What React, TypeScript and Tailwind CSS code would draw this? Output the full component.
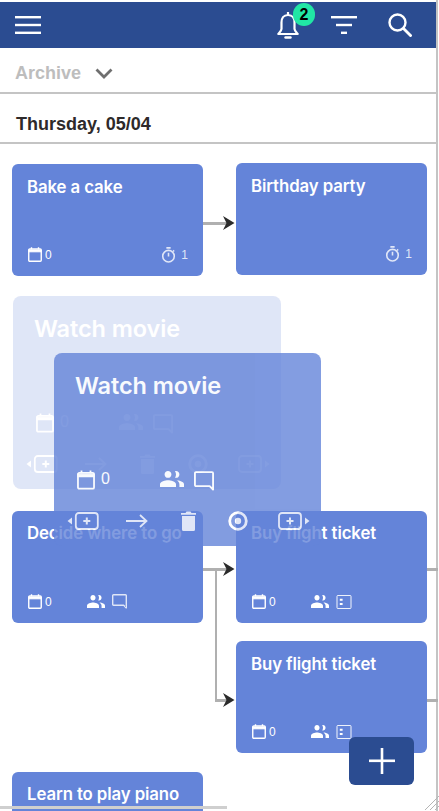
import React from "react";

const sans = "font-['Liberation_Sans',Arial,sans-serif]";
const card = "font-['Inter',sans-serif]";

function Calendar({ className = "" }: { className?: string }) {
  return (
    <svg viewBox="0 0 14 15" className={className} fill="none" stroke="currentColor">
      <rect x="0.75" y="2" width="12.5" height="12.25" rx="1" strokeWidth="1.4" />
      <path d="M.75 3h12.5v1.800H.75z" fill="currentColor" strokeWidth="1" />
      <path d="M3.500.2v2M10.500.2v2" strokeWidth="1.400" />
    </svg>
  );
}
function Timer({ className = "" }: { className?: string }) {
  return (
    <svg viewBox="0 0 14 15" className={className} fill="none" stroke="currentColor" strokeWidth="1.500">
      <circle cx="7" cy="8.600" r="5.400" />
      <path d="M5 .8h4M7 5.400v3.400M11.300 3.200l1 1" />
    </svg>
  );
}
function People({ className = "" }: { className?: string }) {
  return (
    <svg viewBox="2 5 21 14" className={className} fill="currentColor" preserveAspectRatio="none">
      <path d="M16 11c1.660 0 2.990-1.340 2.990-3S17.660 5 16 5c-.3 0-.6.05-.9.14.6.72.9 1.780.9 2.860 0 1.080-.33 2.100-.9 2.860.29.09.6.14.9.14zM9 11c1.660 0 3-1.340 3-3S10.660 5 9 5 6 6.340 6 8s1.340 3 3 3zm0 2c-2.330 0-7 1.170-7 3.500V19h14v-2.500C16 14.170 11.330 13 9 13zm7.500.1c1.450.98 2.500 2 2.500 3.400V19h4v-2.500c0-2.100-3.900-3.200-6.500-3.400z" />
    </svg>
  );
}
function Comment({ className = "" }: { className?: string }) {
  return (
    <svg viewBox="0 0 15 15" className={className} fill="none" stroke="currentColor" strokeWidth="1.400">
      <path d="M1.500.8h12a.8.8 0 0 1 .8.8v12.300l-2.600-2.600H1.500a.8.8 0 0 1-.8-.8V1.600a.8.8 0 0 1 .8-.8z" strokeLinejoin="round" />
    </svg>
  );
}
function Detail({ className = "" }: { className?: string }) {
  return (
    <svg viewBox="0 0 16 15" className={className} fill="none" stroke="currentColor" strokeWidth="1">
      <rect x=".5" y=".5" width="15" height="14" rx="1" />
      <path d="M3.500 4h3v2.200h-3zM3.500 8.500h3v2.200h-3z" fill="currentColor" stroke="none" />
    </svg>
  );
}
function AddBox({ side }: { side: "l" | "r" }) {
  return (
    <svg viewBox="0 0 32 18" className="w-[32px] h-[18px]" fill="none" stroke="currentColor">
      {side === "l" ? <path d="M5 5.500v7L.5 9z" fill="currentColor" stroke="none" /> : <path d="M27 5.500v7l4.500-3.500z" fill="currentColor" stroke="none" />}
      <rect x={side === "l" ? 8.8 : 1} y="1" width="22" height="16" rx="3" strokeWidth="1.800" />
      <path d={side === "l" ? "M19.800 5.500v7M16.300 9h7" : "M12 5.500v7M8.500 9h7"} strokeWidth="2" />
    </svg>
  );
}

function Task({ title, left, top, calendar, timer, extra, low }: { title: string; left: string; top: string; calendar?: boolean; timer?: boolean; extra?: "comment" | "detail"; low?: boolean }) {
  return (
    <div className={`absolute w-[191px] h-[112px] rounded-[6px] bg-[#6484d9] text-white flex flex-col pl-[16px] pr-[15px] pb-[14px] ${low ? "pt-[13px]" : "pt-[12px]"} ${left} ${top} ${card}`}>
      <div className="ml-[-1px] text-[16.8px] leading-[21px] font-semibold tracking-[-0.1px] whitespace-nowrap">{title}</div>
      <div className="mt-auto h-[15px] flex items-center">
        {calendar && (
          <div className="w-[59px] flex items-center">
            <Calendar className="w-[14px] h-[15px]" />
            <span className={`ml-[3px] text-[12px] leading-none ${sans}`}>0</span>
          </div>
        )}
        {extra && (
          <div className="flex items-center gap-[7px]">
            <People className="w-[18px] h-[13px]" />
            {extra === "comment" ? <Comment className="w-[15px] h-[15px] opacity-80" /> : <Detail className="w-[16px] h-[14px]" />}
          </div>
        )}
        {timer && (
          <div className="ml-auto flex items-center gap-[5px] opacity-80">
            <Timer className="w-[15px] h-[16px]" />
            <span className={`text-[12px] leading-none ${sans}`}>1</span>
          </div>
        )}
      </div>
    </div>
  );
}

function Drag({ className }: { className: string }) {
  return (
    <div className={`absolute h-[193px] rounded-[8px] bg-[#6484d9] text-white flex flex-col pl-[13px] pr-[11px] pt-[18px] pb-[15px] ${card} ${className}`}>
      <div className="ml-[8px] text-[23.5px] leading-[29px] font-semibold tracking-[-0.1px]">Watch movie</div>
      <div className="mt-auto ml-[10px] flex items-start gap-[6px]">
        <Calendar className="w-[18px] h-[22px]" />
        <span className={`w-[53px] mt-[2px] text-[16px] leading-none ${sans}`}>0</span>
        <People className="mt-[2px] w-[24px] h-[16px]" />
        <Comment className="ml-[4px] mt-[2px] w-[20px] h-[20px]" />
      </div>
      <div className="mt-[20px] h-[20px] flex items-center justify-between">
        <AddBox side="l" />
        <svg viewBox="0 0 22 14" className="w-[22px] h-[14px] ml-[-3px]" fill="none" stroke="currentColor" strokeWidth="1.800">
          <path d="M0 7h20M14 1l6.500 6-6.500 6" />
        </svg>
        <svg viewBox="0 0 15 20" className="w-[15px] h-[20px] ml-[3px]" fill="currentColor">
          <path d="M1 5h13v13.500a1.500 1.500 0 0 1-1.500 1.500h-10A1.500 1.500 0 0 1 1 18.500zM0 2h4.500l1-1.500h4l1 1.500H15v1.800H0z" />
        </svg>
        <svg viewBox="0 0 20 20" className="w-[20px] h-[20px] ml-[3px]" fill="none" stroke="currentColor">
          <circle cx="10" cy="10" r="8.300" strokeWidth="2.800" />
          <circle cx="10" cy="10" r="3.200" fill="currentColor" stroke="none" />
        </svg>
        <AddBox side="r" />
      </div>
    </div>
  );
}

const Arrow = ({ className }: { className: string }) => (
  <svg viewBox="0 0 12 14" className={`absolute w-[12px] h-[14px] text-[#2b2b2b] ${className}`} fill="currentColor">
    <path d="M0 0l11.500 7L0 14l3.500-7z" />
  </svg>
);

const line = "absolute bg-[#b0b0b0]";

export default function App() {
  return (
    <div className={`relative w-[439px] h-[811px] overflow-hidden bg-white ${sans}`}>
      <div className="relative w-[438px] h-[811px] pt-[2px] border-r-[2px] border-[#c4c4c4]">
        <header className="h-[46px] bg-[#2b4c91] text-white flex items-center pl-[15px] pr-[24px]">
          <svg viewBox="0 0 26 18" className="w-[26px] h-[18px]" fill="currentColor">
            <rect width="26" height="2.400" />
            <rect y="7.800" width="26" height="2.400" />
            <rect y="15.600" width="26" height="2.400" />
          </svg>
          <div className="ml-auto flex items-center gap-[31px]">
            <div className="relative w-[24px] h-[28px]">
              <svg viewBox="0 0 24 28" className="w-[24px] h-[28px]" fill="none" stroke="currentColor" strokeWidth="2.200">
                <path d="M12 1v3M12 4c-4.500 0-6.500 3.500-6.500 7.500V18c0 1.500-1.500 3-3.200 5h19.400C20 21 18.500 19.500 18.500 18v-6.500C18.500 7.500 16.500 4 12 4z" strokeLinejoin="round" />
                <path d="M9.500 26.500h5" strokeWidth="2.400" strokeLinecap="round" />
              </svg>
              <span className="absolute left-[17px] top-[-8px] w-[22px] h-[23px] rounded-full bg-[#21e6a5] text-black text-[16px] font-bold leading-[23px] text-center">2</span>
            </div>
            <svg viewBox="0 0 26 18" className="w-[26px] h-[18px]" fill="currentColor">
              <rect width="26" height="2.400" />
              <rect x="5" y="7.800" width="16" height="2.400" />
              <rect x="10" y="15.600" width="6" height="2.400" />
            </svg>
            <svg viewBox="0 0 24 24" className="w-[24px] h-[24px]" fill="none" stroke="currentColor" strokeWidth="2.400">
              <circle cx="9.500" cy="9.500" r="8" />
              <path d="M15 15l8.500 8.500" strokeWidth="2.800" />
            </svg>
          </div>
        </header>
        <div className="h-[46px] border-b-[2px] border-[#c4c4c4] flex items-center pl-[15px] pt-[7px]">
          <span className="text-[18px] font-bold text-[#bdbdbd]">Archive</span>
          <svg viewBox="0 0 18 12" className="w-[18px] h-[12px] ml-[14px] text-[#6f6f6f]" fill="none" stroke="currentColor" strokeWidth="2.800">
            <path d="M1.500 1.500L9 9l7.500-7.500" />
          </svg>
        </div>
        <div className="h-[50px] border-b-[2px] border-[#c4c4c4] flex items-center pl-[16px] pt-[12px]">
          <span className="text-[18px] font-bold text-[#2e2a2a]">Thursday, 05/04</span>
        </div>

        <Task title="Bake a cake" left="left-[12px]" top="top-[164px]" calendar timer low />
        <Task title="Birthday party" left="left-[236px]" top="top-[163px]" timer low />
        <Drag className="left-[13px] top-[296px] w-[268px] opacity-20" />
        <Task title="Decide where to go" left="left-[12px]" top="top-[511px]" calendar extra="comment" />
        <Task title="Buy flight ticket" left="left-[236px]" top="top-[511px]" calendar extra="detail" />
        <Task title="Buy flight ticket" left="left-[236px]" top="top-[641px]" calendar extra="detail" low />
        <Task title="Learn to play piano" left="left-[12px]" top="top-[772px]" />

        <div className={`${line} left-[203px] top-[222px] w-[24px] h-[3px]`} />
        <Arrow className="left-[223px] top-[216px]" />
        <div className={`${line} left-[203px] top-[568px] w-[24px] h-[3px]`} />
        <Arrow className="left-[223px] top-[562px]" />
        <div className={`${line} left-[215px] top-[568px] w-[2px] h-[133px]`} />
        <div className={`${line} left-[215px] top-[699px] w-[12px] h-[3px]`} />
        <Arrow className="left-[223px] top-[693px]" />
        <div className={`${line} left-[427px] top-[568px] w-[11px] h-[3px]`} />
        <div className={`${line} left-[427px] top-[699px] w-[11px] h-[3px]`} />

        <Drag className="left-[54px] top-[353px] w-[267px] opacity-80" />

        <div className="absolute left-0 top-[806px] w-[227px] h-[3px] bg-[#cfcfcf]" />
        <button className="absolute left-[349px] top-[737px] w-[65px] h-[48px] rounded-[6px] bg-[#2b4c91] flex items-center justify-center text-white">
          <svg viewBox="0 0 26 26" className="w-[26px] h-[26px]" fill="currentColor">
            <rect y="11.500" width="26" height="2.600" />
            <rect x="11.700" width="2.600" height="26" />
          </svg>
        </button>
        <svg viewBox="0 0 14 14" className="absolute left-[425px] top-[796px] w-[14px] h-[14px] text-[#b5b5b5]" fill="none" stroke="currentColor" strokeWidth="1">
          <path d="M0 14L14 0M5 14L14 5M10 14l4-4" />
        </svg>
      </div>
    </div>
  );
}
